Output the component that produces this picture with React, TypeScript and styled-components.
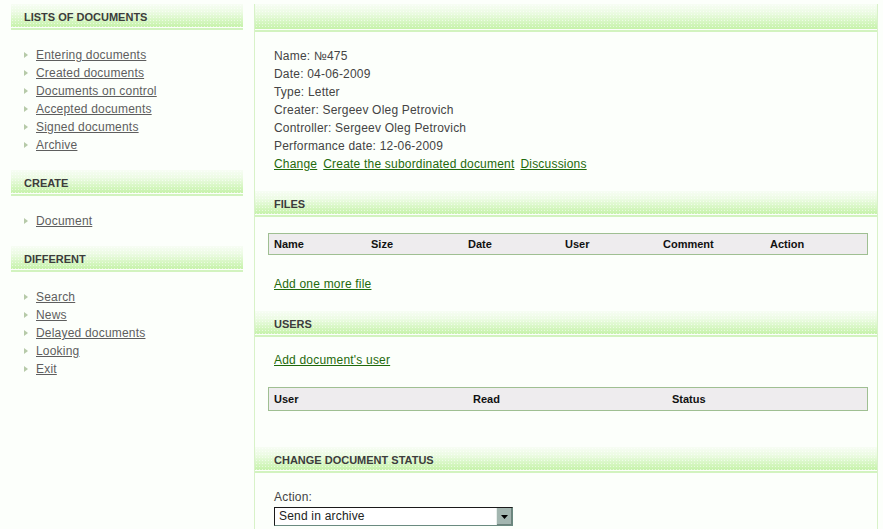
import styled, { createGlobalStyle } from 'styled-components'

const GlobalStyle = createGlobalStyle`
  html, body {
    margin: 0;
    padding: 0;
    background: #fcfffb;
  }
  body {
    font-family: 'Liberation Sans', Arial, sans-serif;
    font-size: 12px;
    letter-spacing: 0.2px;
    color: #444444;
  }
`

const sideGroups = [
  {
    title: 'Lists of documents',
    items: [
      'Entering documents',
      'Created documents',
      'Documents on control',
      'Accepted documents',
      'Signed documents',
      'Archive',
    ],
  },
  { title: 'Create', items: ['Document'] },
  {
    title: 'Different',
    items: ['Search', 'News', 'Delayed documents', 'Looking', 'Exit'],
  },
]

const documentInfo = [
  'Name: №475',
  'Date: 04-06-2009',
  'Type: Letter',
  'Creater: Sergeev Oleg Petrovich',
  'Controller: Sergeev Oleg Petrovich',
  'Performance date: 12-06-2009',
]

const fileColumns = [
  { label: 'Name', width: 97 },
  { label: 'Size', width: 97 },
  { label: 'Date', width: 97 },
  { label: 'User', width: 98 },
  { label: 'Comment', width: 107 },
  { label: 'Action', width: 0 },
]

const userColumns = [
  { label: 'User', width: 199 },
  { label: 'Read', width: 199 },
  { label: 'Status', width: 0 },
]

const TableHead = (props: {
  columns: { label: string; width: number }[]
  height: number
}) => {
  const template = props.columns
    .map((c) => (c.width ? `${c.width}px` : '1fr'))
    .join(' ')
  return (
    <HeadRow $height={props.height} style={{ gridTemplateColumns: template }}>
      {props.columns.map((c) => (
        <HeadCell key={c.label}>{c.label}</HeadCell>
      ))}
    </HeadRow>
  )
}

const App = () => {
  return (
    <>
      <GlobalStyle />
      <Page>
        <Sidebar>
          {sideGroups.map((group) => (
            <div key={group.title}>
              <SectionHeader $height={26}>{group.title}</SectionHeader>
              <MenuList>
                {group.items.map((item) => (
                  <MenuItem key={item}>
                    <Bullet />
                    <MenuLink href='#'>{item}</MenuLink>
                  </MenuItem>
                ))}
              </MenuList>
            </div>
          ))}
        </Sidebar>

        <Main>
          <SectionHeader $height={28} />
          <InfoBlock>
            {documentInfo.map((line) => (
              <InfoLine key={line}>{line}</InfoLine>
            ))}
            <LinkRow>
              <GreenLink href='#'>Change</GreenLink>
              <GreenLink href='#'>Create the subordinated document</GreenLink>
              <GreenLink href='#'>Discussions</GreenLink>
            </LinkRow>
          </InfoBlock>

          <SectionHeader $height={26} $indent={19}>
            Files
          </SectionHeader>
          <TableBlock $top={16} $bottom={20}>
            <TableHead columns={fileColumns} height={22} />
          </TableBlock>
          <LinkBlock $bottom={18}>
            <GreenLink href='#'>Add one more file</GreenLink>
          </LinkBlock>

          <SectionHeader $height={26} $indent={19}>
            Users
          </SectionHeader>
          <LinkBlock $top={14}>
            <GreenLink href='#'>Add document's user</GreenLink>
          </LinkBlock>
          <TableBlock $top={18} $bottom={36}>
            <TableHead columns={userColumns} height={24} />
          </TableBlock>

          <SectionHeader $height={26} $indent={19}>
            Change document status
          </SectionHeader>
          <FormBlock>
            <FieldLabel>Action:</FieldLabel>
            <SelectBox>
              <SelectValue>Send in archive</SelectValue>
              <SelectArrow>
                <svg width='7' height='4' viewBox='0 0 7 4'>
                  <path d='M0 0h7L3.5 4z' fill='#000' />
                </svg>
              </SelectArrow>
            </SelectBox>
          </FormBlock>
        </Main>
      </Page>
    </>
  )
}

export default App

const Page = styled.div`
  display: flex;
  align-items: flex-start;
  gap: 11px;
  padding: 4px 5px 0 11px;
  min-height: 525px;
  box-sizing: border-box;
`

const Sidebar = styled.div`
  width: 232px;
  flex-shrink: 0;
`

const SectionHeader = styled.div<{ $height: number; $indent?: number }>`
  height: ${(p) => p.$height - 3}px;
  line-height: ${(p) => p.$height + 1}px;
  padding-left: ${(p) => p.$indent ?? 13}px;
  font-size: 11px;
  font-weight: bold;
  letter-spacing: 0;
  text-transform: uppercase;
  color: #3c3c3c;
  background-color: #eefbe6;
  background-image: radial-gradient(
      circle,
      rgba(255, 255, 255, 0.55) 0.6px,
      transparent 0.8px
    ),
    linear-gradient(#f7fdf4 0%, #ecfbe3 35%, #d4f6bf 75%, #c6f2aa 100%);
  background-size: 3px 3px, 100% 100%;
  border-bottom: 1px solid #fcfffb;
  box-shadow: 0 2px 0 #d2f3bf;
  margin-bottom: 2px;
`

const MenuList = styled.ul`
  list-style: none;
  margin: 0;
  padding: 16px 0 16px 13px;
`

const MenuItem = styled.li`
  display: flex;
  align-items: center;
  height: 18px;
`

const Bullet = styled.span`
  width: 0;
  height: 0;
  border-top: 3px solid transparent;
  border-bottom: 3px solid transparent;
  border-left: 4px solid #b6caa8;
  margin-right: 8px;
`

const MenuLink = styled.a`
  color: #5e5e5e;
  text-decoration: underline;
  font-size: 12px;
`

const Main = styled.div`
  flex: 1;
  min-height: 525px;
  border-left: 1px solid #d8f2c8;
  border-right: 1px solid #d8f2c8;
`

const InfoBlock = styled.div`
  padding: 15px 19px 18px 19px;
`

const InfoLine = styled.div`
  height: 18px;
  line-height: 18px;
  color: #444444;
`

const LinkRow = styled.div`
  display: flex;
  gap: 6px;
  height: 18px;
  line-height: 18px;
`

const GreenLink = styled.a`
  color: #1f6a0c;
  text-decoration: underline;
  font-size: 12px;
`

const LinkBlock = styled.div<{ $top?: number; $bottom?: number }>`
  padding: ${(p) => p.$top ?? 0}px 19px ${(p) => p.$bottom ?? 0}px 19px;
  height: 18px;
  line-height: 18px;
`

const TableBlock = styled.div<{ $top: number; $bottom: number }>`
  padding: ${(p) => p.$top}px 9px ${(p) => p.$bottom}px 13px;
`

const HeadRow = styled.div<{ $height: number }>`
  display: grid;
  align-items: center;
  height: ${(p) => p.$height - 2}px;
  border: 1px solid #9fbf92;
  background: #eeecee;
`

const HeadCell = styled.div`
  padding-left: 5px;
  font-size: 11px;
  font-weight: bold;
  letter-spacing: 0;
  color: #111111;
`

const FormBlock = styled.div`
  padding: 15px 19px 0 19px;
`

const FieldLabel = styled.div`
  height: 18px;
  line-height: 18px;
  color: #444444;
`

const SelectBox = styled.div`
  display: flex;
  align-items: stretch;
  width: 239px;
  height: 19px;
  box-sizing: border-box;
  border: 1px solid #1a1a1a;
  border-right-color: #6a8a80;
  border-bottom-color: #6a8a80;
  background: #ffffff;
  margin-top: 1px;
`

const SelectValue = styled.div`
  flex: 1;
  padding-left: 4px;
  line-height: 17px;
  color: #222222;
`

const SelectArrow = styled.div`
  width: 15px;
  display: flex;
  align-items: center;
  justify-content: center;
  background: #a3b6b0;
  border-left: 1px solid #e8efec;
  box-shadow: inset -1px -1px 0 #6d827c;
`
